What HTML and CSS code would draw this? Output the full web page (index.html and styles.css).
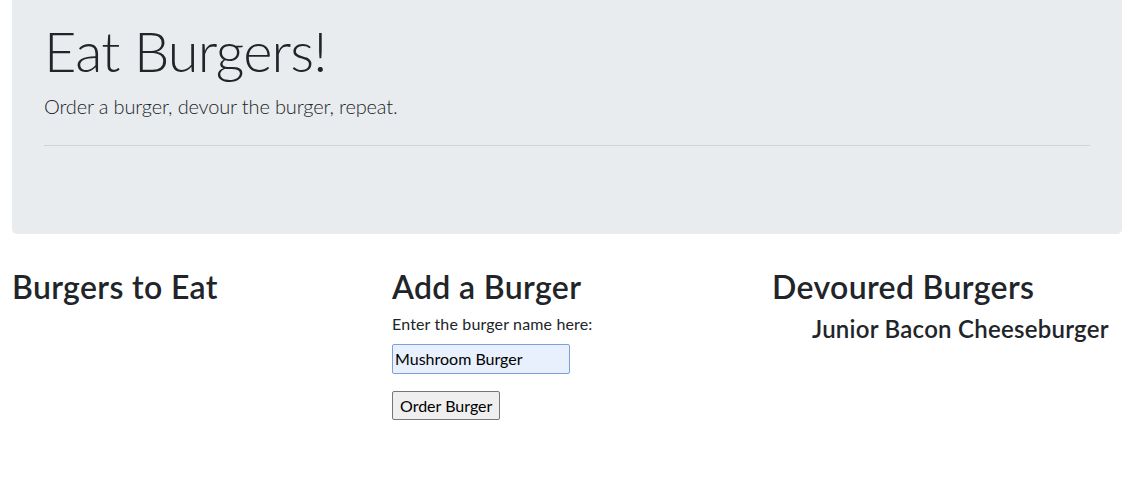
FILE: index.html
```html
<!DOCTYPE html>
<html>
<head>
<meta charset="utf-8">
<title>Eat Burgers!</title>
<link rel="stylesheet" href="styles.css">
</head>
<body>
<div class="container">
  <div class="jumbotron">
    <h1 class="display">Eat Burgers!</h1>
    <p class="lead">Order a burger, devour the burger, repeat.</p>
    <hr class="rule">
  </div>
  <div class="row">
    <div class="col">
      <h2 class="heading">Burgers to Eat</h2>
    </div>
    <div class="col">
      <h2 class="heading">Add a Burger</h2>
      <form class="form">
        <label class="label" for="burger">Enter the burger name here:</label>
        <input class="input" id="burger" type="text" value="Mushroom Burger">
        <button class="button" type="button">Order Burger</button>
      </form>
    </div>
    <div class="col">
      <h2 class="heading">Devoured Burgers</h2>
      <ul class="list">
        <li class="item">Junior Bacon Cheeseburger</li>
      </ul>
    </div>
  </div>
</div>
</body>
</html>
```
FILE: styles.css
```css
body {
  margin: 0;
  font-family: "Lato", "Liberation Sans", sans-serif;
  color: #212529;
  background: #fff;
}
.container {
  width: 1110px;
  margin: 0 auto;
}
.jumbotron {
  background: #e9ecef;
  border-radius: 0 0 5px 5px;
  padding: 17px 32px 88px;
  margin-bottom: 34px;
}
.display {
  margin: 0 0 7px;
  font-size: 56px;
  font-weight: 300;
  line-height: 1.2;
  letter-spacing: -0.8px;
}
.lead {
  margin: 0 0 24px;
  font-size: 20px;
  font-weight: 300;
  line-height: 1.5;
  letter-spacing: -0.15px;
}
.rule {
  margin: 0;
  border: 0;
  border-top: 1px solid rgba(0, 0, 0, 0.1);
}
.row {
  display: grid;
  grid-template-columns: 380px 380px 350px;
}
.heading {
  margin: 0 0 8px;
  font-size: 32px;
  font-weight: 600;
  line-height: 1.2;
  letter-spacing: 0.35px;
}
.form {
  display: flex;
  flex-direction: column;
  align-items: flex-start;
}
.label {
  font-size: 16px;
  line-height: 18px;
  margin-bottom: 11px;
  letter-spacing: 0.15px;
}
.input {
  width: 178px;
  height: 30px;
  box-sizing: border-box;
  background: #e8f0fe;
  border: 1px solid #7aa0dc;
  border-radius: 2px;
  font: 16px "Lato", sans-serif;
  padding: 0 2px;
  margin-bottom: 17px;
  color: #000;
}
.button {
  height: 29px;
  box-sizing: border-box;
  background: #efefef;
  border: 1px solid #767676;
  border-radius: 2px;
  font: 16px "Lato", sans-serif;
  padding: 0 7px;
  color: #000;
}
.list {
  list-style: none;
  margin: 0;
  padding-left: 40px;
}
.item {
  font-size: 24px;
  font-weight: 600;
  line-height: 1.2;
  letter-spacing: 0.25px;
}
```
